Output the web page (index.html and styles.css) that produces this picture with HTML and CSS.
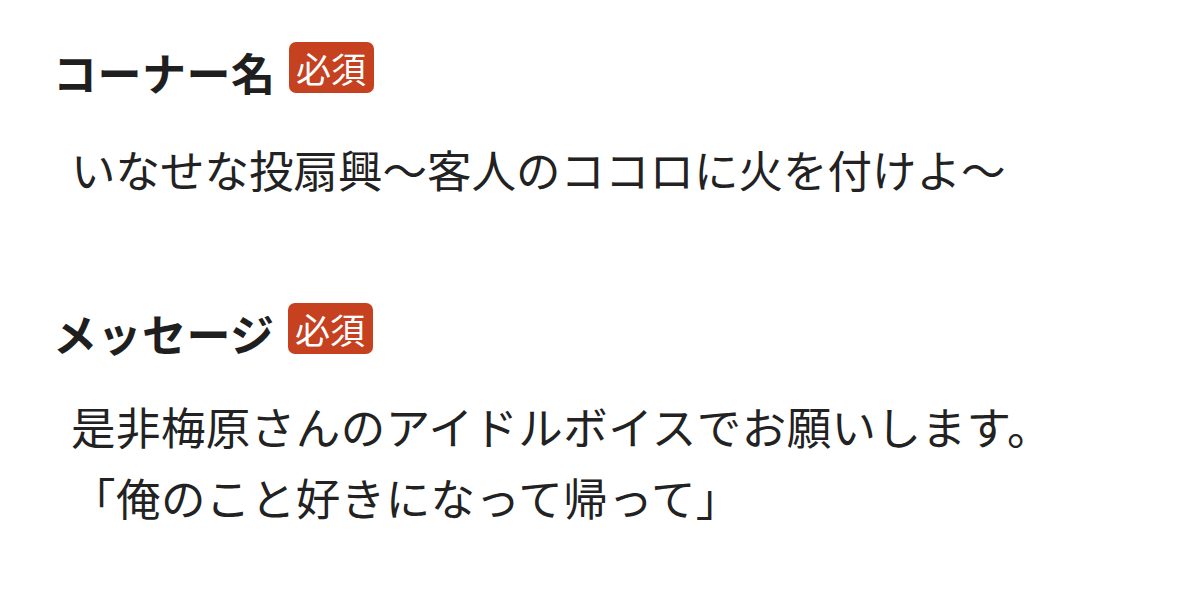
FILE: index.html
```html
<!DOCTYPE html>
<html lang="ja">
<head>
<meta charset="utf-8">
<link rel="stylesheet" href="styles.css">
</head>
<body>
<main class="form">
  <section class="field field-first">
    <div class="label-row">
      <h2 class="label">コーナー名</h2>
      <span class="badge">必須</span>
    </div>
    <p class="value value-single">いなせな投扇興〜客人のココロに火を付けよ〜</p>
  </section>
  <section class="field field-second">
    <div class="label-row">
      <h2 class="label">メッセージ</h2>
      <span class="badge">必須</span>
    </div>
    <p class="value value-multi">是非梅原さんのアイドルボイスでお願いします。<br>「俺のこと好きになって帰って」</p>
  </section>
</main>
</body>
</html>
```

FILE: styles.css
```css
html, body {
  margin: 0;
  padding: 0;
  background: #ffffff;
}
body {
  font-family: "Noto Sans CJK JP", "Noto Sans", sans-serif;
  color: #222222;
  width: 1200px;
  height: 608px;
  overflow: hidden;
}
.form {
  display: flex;
  flex-direction: column;
  padding: 0 0 0 53px;
}
.field-first {
  margin-top: 42px;
}
.field-second {
  margin-top: 104px;
}
.label-row {
  display: flex;
  align-items: center;
  gap: 13px;
  height: 60px;
}
.label {
  margin: 0;
  font-size: 44px;
  font-weight: 700;
  line-height: 60px;
  color: #1f1f1f;
  letter-spacing: 0.5px;
}
.badge {
  display: inline-flex;
  align-items: center;
  justify-content: center;
  width: 85px;
  height: 51px;
  border-radius: 7px;
  background: #c5411f;
  color: #ffffff;
  font-size: 35px;
  font-weight: 400;
  line-height: 1;
  margin-top: -10px;
}
.value {
  margin: 0;
  padding-left: 18px;
  font-size: 44.5px;
  font-weight: 400;
  color: #222222;
}
.value-single {
  margin-top: 37px;
  line-height: 60px;
}
.value-multi {
  margin-top: 27px;
  line-height: 71px;
  letter-spacing: 0.45px;
}
```
